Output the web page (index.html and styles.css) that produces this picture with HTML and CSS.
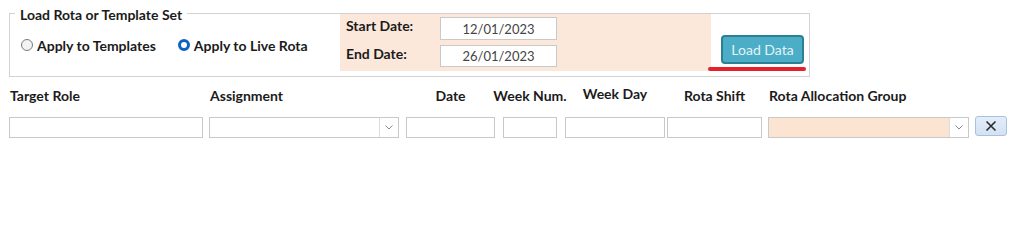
FILE: index.html
```html
<!DOCTYPE html>
<html lang="en">
<head>
    <meta charset="UTF-8">
    <title>Load Rota</title>
    <link rel="stylesheet" href="styles.css">
</head>
<body>
    <div class="load-frame">
        <span class="frame-title">Load Rota or Template Set</span>

        <div class="mode-options">
            <label class="radio-option">
                <input type="radio" name="mode" value="templates">
                <span>Apply to Templates</span>
            </label>
            <label class="radio-option">
                <input type="radio" name="mode" value="live" checked>
                <span>Apply to Live Rota</span>
            </label>
        </div>

        <div class="date-panel">
            <label class="date-label" for="start-date">Start Date:</label>
            <input class="date-input" id="start-date" type="text" value="12/01/2023">
            <label class="date-label date-label-end" for="end-date">End Date:</label>
            <input class="date-input" id="end-date" type="text" value="26/01/2023">
        </div>

        <div class="action-area">
            <button class="btn-load">Load Data</button>
            <div class="load-underline"></div>
        </div>
    </div>

    <div class="allocation-row">
        <div class="field field-role">
            <div class="field-label">Target Role</div>
            <input class="text-box" type="text">
        </div>
        <div class="field field-assignment">
            <div class="field-label">Assignment</div>
            <div class="combo">
                <span class="combo-value"></span>
                <span class="combo-arrow"><svg width="8" height="5" viewBox="0 0 8 5"><path d="M0.5 0.5 L4 4 L7.5 0.5" fill="none" stroke="#8a8a8a" stroke-width="1"/></svg></span>
            </div>
        </div>
        <div class="field field-date centered">
            <div class="field-label">Date</div>
            <input class="text-box" type="text">
        </div>
        <div class="field field-week centered">
            <div class="field-label">Week Num.</div>
            <input class="text-box" type="text">
        </div>
        <div class="field field-day centered">
            <div class="field-label label-raised">Week Day</div>
            <input class="text-box" type="text">
        </div>
        <div class="field field-shift centered">
            <div class="field-label">Rota Shift</div>
            <input class="text-box" type="text">
        </div>
        <div class="field field-group">
            <div class="field-label">Rota Allocation Group</div>
            <div class="combo combo-peach">
                <span class="combo-value"></span>
                <span class="combo-arrow"><svg width="8" height="5" viewBox="0 0 8 5"><path d="M0.5 0.5 L4 4 L7.5 0.5" fill="none" stroke="#8a8a8a" stroke-width="1"/></svg></span>
            </div>
        </div>
        <div class="field field-remove">
            <div class="field-label">&nbsp;</div>
            <button class="btn-remove" title="Remove">
                <svg width="12" height="12" viewBox="0 0 12 12"><path d="M1.5 1.5 L10.5 10.5 M10.5 1.5 L1.5 10.5" stroke="#2b2b2b" stroke-width="1.6"/></svg>
            </button>
        </div>
    </div>
</body>
</html>
```

FILE: styles.css
```css
* {
    margin: 0;
    padding: 0;
    box-sizing: border-box;
}

body {
    font-family: Lato, 'Open Sans', sans-serif;
    font-size: 14px;
    color: #1b1b1b;
    background: #ffffff;
    width: 1024px;
    height: 241px;
    overflow: hidden;
}

/* top frame */
.load-frame {
    position: relative;
    display: flex;
    width: 801px;
    height: 64px;
    margin: 13px 0 0 9px;
    border: 1px solid #d2d2d2;
}

.frame-title {
    position: absolute;
    top: -8px;
    left: 5px;
    padding: 0 5px;
    line-height: 18px;
    font-weight: 700;
    background: #ffffff;
}

.mode-options {
    width: 330px;
    display: flex;
    align-items: center;
    gap: 22px;
    padding-left: 11px;
}

.radio-option {
    display: flex;
    align-items: center;
    gap: 4px;
    font-weight: 700;
    cursor: pointer;
}

.radio-option input {
    appearance: none;
    -webkit-appearance: none;
    width: 12px;
    height: 12px;
    border-radius: 50%;
    border: 1px solid #7a7a7a;
    background: #f3f3f3;
    margin: 0;
}

.radio-option input:checked {
    border: 3px solid #0a63c2;
    background: #ffffff;
}

.date-panel {
    width: 371px;
    height: 57px;
    background: #fce8da;
    display: grid;
    grid-template-columns: 94px 117px;
    grid-template-rows: 23px 22px;
    row-gap: 5px;
    padding: 3px 0 0 6px;
    align-items: start;
}

.date-label {
    font-weight: 700;
    line-height: 17px;
}

.date-input {
    width: 117px;
    height: 100%;
    border: 1px solid #c9c9c9;
    background: #ffffff;
    text-align: center;
    font-family: inherit;
    font-size: 13px;
    color: #444444;
    outline: none;
}

.action-area {
    flex: 1;
    display: flex;
    flex-direction: column;
    align-items: flex-start;
    padding: 21px 0 0 10px;
}

.btn-load {
    width: 83px;
    height: 29px;
    background: #4badc6;
    border: 2px solid #2c8096;
    border-radius: 4px;
    color: #e4f3f7;
    font-family: inherit;
    font-size: 14px;
    cursor: pointer;
}

.load-underline {
    width: 98px;
    height: 4px;
    margin: 3px 0 0 -13px;
    background: #e3222b;
    border-radius: 3px;
}

/* allocation row */
.allocation-row {
    display: grid;
    grid-template-columns: 200px 197px 97px 62px 102px 101px 207px 32px;
    margin: 11px 0 0 9px;
}

.field {
    display: flex;
    flex-direction: column;
    align-items: flex-start;
}

.field.centered {
    align-items: center;
}

.field-label {
    font-weight: 700;
    line-height: 16px;
    height: 16px;
    margin-bottom: 13px;
    white-space: nowrap;
}

.label-raised {
    position: relative;
    top: -2px;
}

.field-role .field-label,
.field-assignment .field-label,
.field-group .field-label {
    padding-left: 1px;
}

.text-box {
    width: 100%;
    height: 21px;
    border: 1px solid #c9c9c9;
    background: #ffffff;
    font-family: inherit;
    outline: none;
}

.field-role { width: 194px; }
.field-date { width: 89px; }
.field-week { width: 54px; }
.field-day { width: 100px; }
.field-shift { width: 95px; }

.combo {
    display: flex;
    height: 21px;
    border: 1px solid #c9c9c9;
    background: #ffffff;
}

.field-assignment .combo { width: 190px; }
.field-group .combo { width: 201px; }

.combo-peach {
    background: #fce4d3;
}

.combo-value {
    flex: 1;
}

.combo-arrow {
    width: 19px;
    display: flex;
    align-items: center;
    justify-content: center;
    border-left: 1px solid #dcdcdc;
    background: #ffffff;
}

.btn-remove {
    width: 32px;
    height: 20px;
    margin-top: -1px;
    border: 1px solid #a9c1dc;
    border-radius: 3px;
    background: linear-gradient(#e4eefa, #d2e1f3);
    display: flex;
    align-items: center;
    justify-content: center;
    cursor: pointer;
}
```
